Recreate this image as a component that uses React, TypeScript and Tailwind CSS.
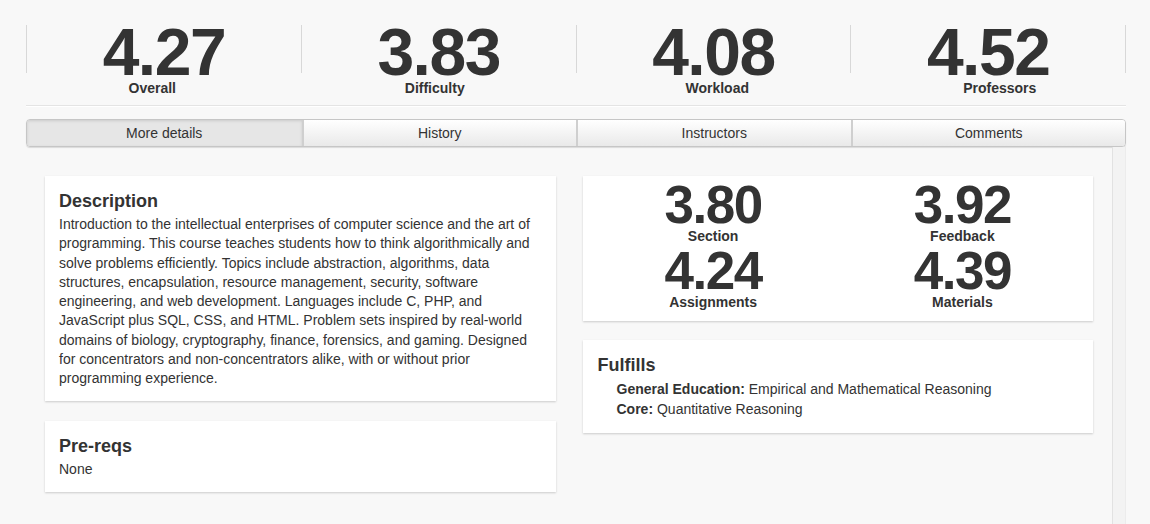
import React from 'react';

const topStats = [
  { value: '4.27', label: 'Overall' },
  { value: '3.83', label: 'Difficulty' },
  { value: '4.08', label: 'Workload' },
  { value: '4.52', label: 'Professors' },
];

const tabs = ['More details', 'History', 'Instructors', 'Comments'];

const sectionStats = [
  { value: '3.80', label: 'Section' },
  { value: '3.92', label: 'Feedback' },
  { value: '4.24', label: 'Assignments' },
  { value: '4.39', label: 'Materials' },
];

const descriptionLines = [
  'Introduction to the intellectual enterprises of computer science and the art of',
  'programming. This course teaches students how to think algorithmically and',
  'solve problems efficiently. Topics include abstraction, algorithms, data',
  'structures, encapsulation, resource management, security, software',
  'engineering, and web development. Languages include C, PHP, and',
  'JavaScript plus SQL, CSS, and HTML. Problem sets inspired by real-world',
  'domains of biology, cryptography, finance, forensics, and gaming. Designed',
  'for concentrators and non-concentrators alike, with or without prior',
  'programming experience.',
];

function Card({ title, children }: { title: string; children: React.ReactNode }) {
  return (
    <div className="bg-white shadow-[0_1px_2px_rgba(0,0,0,0.18)] px-[14px] pt-[14px] pb-[13px]">
      <h3 className="text-[18px] leading-[22px] font-bold text-[#333] mb-[3px]">{title}</h3>
      {children}
    </div>
  );
}

export default function App() {
  return (
    <div
      className="h-[524px] w-[1150px] overflow-hidden bg-[#f8f8f8] text-[#333] flex flex-col"
      style={{ fontFamily: '"Liberation Sans", Arial, sans-serif' }}
    >
      <div className="mx-[26px] w-[1100px] pt-[25px]">
        {/* Big numbers */}
        <div className="grid grid-cols-4 border-r border-[#d8d8d8]">
          {topStats.map((s) => (
            <div key={s.label} className="h-[48px] border-l border-[#d8d8d8] flex justify-center">
              <span className="text-[66px] leading-[48px] pt-[3px] font-bold tracking-[-1.5px] h-[48px]">{s.value}</span>
            </div>
          ))}
        </div>
        <div className="grid grid-cols-4 -mx-[15px] mt-[7px]">
          {topStats.map((s) => (
            <div key={s.label} className="text-center text-[14px] leading-[16px] font-bold">
              {s.label}
            </div>
          ))}
        </div>
        <div className="mt-[9px] border-b border-[#e4e4e4] shadow-[0_1px_0_rgba(255,255,255,1)]" />

        {/* Tabs */}
        <div className="mt-[13px] grid grid-cols-4 h-[28px] rounded-[4px] border border-[#c6c6c6] shadow-[0_1px_1px_rgba(0,0,0,0.12)] overflow-hidden">
          {tabs.map((t, i) => (
            <div
              key={t}
              className={`flex items-center justify-center text-[14px] ${i > 0 ? 'border-l-2 border-[#cfcfcf]' : ''} ${
                i === 0
                  ? 'bg-[#e6e6e6] shadow-[inset_0_1px_3px_rgba(0,0,0,0.12)]'
                  : 'bg-linear-to-b from-white to-[#e9e9e9]'
              }`}
            >
              {t}
            </div>
          ))}
        </div>
      </div>

      {/* Content pane */}
      <div className="mx-[26px] w-[1100px] flex-1 flex">
        <div className="flex-1 grid grid-cols-2 gap-[27px] px-[19px] pt-[29px] items-start">
          <div className="flex flex-col gap-[20px]">
            <Card title="Description">
              <p className="text-[14px] leading-[19.25px] whitespace-nowrap">
                {descriptionLines.map((l, i) => (
                  <React.Fragment key={i}>
                    {l}
                    {i < descriptionLines.length - 1 && <br />}
                  </React.Fragment>
                ))}
              </p>
            </Card>
            <Card title="Pre-reqs">
              <p className="text-[14px] leading-[19px]">None</p>
            </Card>
          </div>

          <div className="flex flex-col gap-[19px]">
            <div className="bg-white shadow-[0_1px_2px_rgba(0,0,0,0.18)] grid grid-cols-2 px-[6px] pt-[5px] pb-[8px] text-center">
              {sectionStats.map((s) => (
                <div key={s.label} className="flex flex-col items-center">
                  <span className="text-[53px] leading-[47px] font-bold tracking-[-1.5px]">{s.value}</span>
                  <span className="text-[14px] leading-[16px] font-bold mb-[3px]">{s.label}</span>
                </div>
              ))}
            </div>

            <div className="bg-white shadow-[0_1px_2px_rgba(0,0,0,0.18)] px-[15px] pt-[14px] pb-[14px]">
              <h3 className="text-[18px] leading-[22px] font-bold mb-[3px]">Fulfills</h3>
              <div className="pl-[19px] text-[14px] leading-[20px]">
                <div>
                  <span className="font-bold">General Education:</span> Empirical and Mathematical Reasoning
                </div>
                <div>
                  <span className="font-bold">Core:</span> Quantitative Reasoning
                </div>
              </div>
            </div>
          </div>
        </div>
        {/* scroll track */}
        <div className="w-[14px] bg-[#f3f3f3] border-l border-[#e2e2e2] border-r border-r-[#ececec]" />
      </div>
    </div>
  );
}
